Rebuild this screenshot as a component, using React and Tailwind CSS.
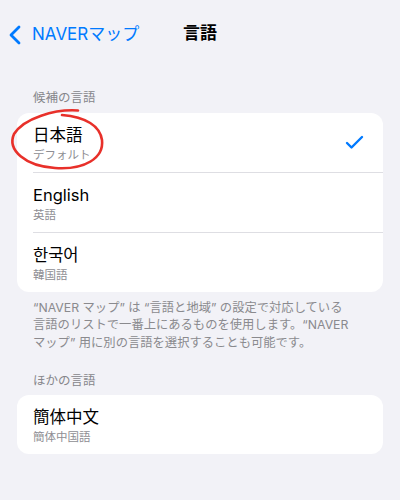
import { useState } from 'react'

const font = { fontFamily: 'Inter, "Noto Sans CJK JP", "Noto Sans CJK KR", sans-serif' }

const suggested = [
    { name: '日本語', sub: 'デフォルト' },
    { name: 'English', sub: '英語' },
    { name: '한국어', sub: '韓国語' },
]

function Check() {
    return (
        <svg width="20" height="16" viewBox="0 0 20 16" className="mr-[18px] mt-[1px]">
            <path d="M2 8 L6.5 12.5 L17 2" fill="none" stroke="#007aff" strokeWidth="2.4" strokeLinecap="round" strokeLinejoin="round"/>
        </svg>
    )
}

function Row({ item, selected, last, onClick }) {
    return (
        <button onClick={onClick} className="w-full flex items-center pl-4 text-left">
            <div className={`flex-1 flex items-center ${last ? 'h-[59px]' : 'h-[60px] border-b border-[#dedee3]'}`}>
                <div className="flex-1 flex flex-col pt-[2px]">
                    <span className="text-[16.5px] leading-[22px] text-black">{item.name}</span>
                    <span className="text-[11.5px] leading-[16px] text-[#8e8e93] mt-[1px]">{item.sub}</span>
                </div>
                {selected && <Check/>}
            </div>
        </button>
    )
}

export default function App() {
    const [selected, setSelected] = useState(0)

    return (
        <div className="w-[400px] h-[500px] bg-[#f2f2f7] relative overflow-hidden" style={font}>
            {/* Nav bar */}
            <header className="h-[68px] flex items-center relative">
                <div className="flex items-center pl-[8px] pt-[1px] text-[#007aff]">
                    <svg width="14" height="20" viewBox="0 0 14 20">
                        <path d="M11 2 L3 10 L11 18" fill="none" stroke="#007aff" strokeWidth="2.8" strokeLinecap="round" strokeLinejoin="round"/>
                    </svg>
                    <span className="ml-[10px] text-[17px]">NAVERマップ</span>
                </div>
                <h1 className="absolute left-0 right-0 text-center text-[17px] font-semibold text-black pointer-events-none">言語</h1>
            </header>

            <main className="px-[17px]">
                <p className="pt-[22px] pl-4 text-[12.5px] leading-[16px] text-[#86868b]">候補の言語</p>
                <div className="mt-[7px] bg-white rounded-[12px] overflow-hidden">
                    {suggested.map((item, i) => (
                        <Row key={item.name} item={item} selected={selected === i} last={i === suggested.length - 1} onClick={() => setSelected(i)}/>
                    ))}
                </div>
                <p className="pl-4 pr-4 mt-[7px] text-[12.3px] leading-[17.3px] text-[#8a8a8e]">
                    “NAVER マップ” は “言語と地域” の設定で対応している<br/>
                    言語のリストで一番上にあるものを使用します。“NAVER<br/>
                    マップ” 用に別の言語を選択することも可能です。
                </p>

                <p className="pt-[22px] pl-4 text-[12.5px] leading-[16px] text-[#86868b]">ほかの言語</p>
                <div className="mt-[6px] bg-white rounded-[12px] overflow-hidden">
                    <Row item={{ name: '簡体中文', sub: '簡体中国語' }} last/>
                </div>
            </main>

            {/* hand-drawn highlight */}
            <svg className="absolute left-0 top-0 pointer-events-none" width="400" height="500">
                <path d="M78 110.5 C55 109, 24 118, 14 134 C7 150, 25 166, 55 168 C85 170, 104 158, 102 140 C100 126, 86 117, 62 115"
                      fill="none" stroke="#e8302a" strokeWidth="2.6" strokeLinecap="round"/>
            </svg>
        </div>
    )
}
